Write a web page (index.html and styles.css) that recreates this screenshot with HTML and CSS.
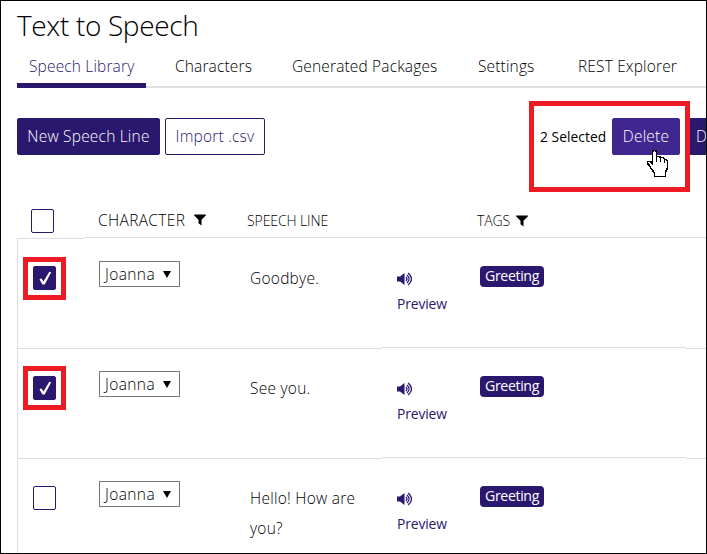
FILE: index.html
```html
<!DOCTYPE html>
<html lang="en">
<head>
<meta charset="utf-8">
<title>Text to Speech</title>
<link rel="stylesheet" href="styles.css">
</head>
<body>
<svg class="defs" aria-hidden="true">
  <symbol id="funnel" viewBox="0 0 12 12"><path d="M0.2 0.5H11.8V1.5L7.5 5.8V11.6L4.5 9.2V5.8L0.2 1.5Z" fill="currentColor"/></symbol>
  <symbol id="speaker" viewBox="0 0 16 14"><path d="M0 4.5H3L7.5 1V13L3 9.5H0Z" fill="currentColor"/><path d="M9 5Q11 7 9 9M10 3Q14.2 7 10 11M11 1Q18 7 11 13" fill="none" stroke="currentColor" stroke-width="1.2"/></symbol>
  <symbol id="check" viewBox="0 0 23 24"><path d="M6.5 13.5L8.3 12.3L10.5 15.5L16.3 5.8L18.2 6.3L11.7 18.4H9.5Z" fill="#fff"/></symbol>
</svg>
<div class="frame">
  <h1 class="title">Text to Speech</h1>
  <nav class="tabs">
    <a class="tab active">Speech Library</a>
    <a class="tab characters">Characters</a>
    <a class="tab packages">Generated Packages</a>
    <a class="tab settings">Settings</a>
    <a class="tab explorer">REST Explorer</a>
  </nav>
  <div class="toolbar">
    <button class="btn new">New Speech Line</button>
    <button class="btn outline">Import .csv</button>
    <span class="selected">2 Selected</span>
    <button class="btn delete">Delete</button>
    <button class="btn next">D</button>
    <div class="highlight-actions"></div>
    <svg class="cursor" viewBox="0 0 22 29" shape-rendering="crispEdges"><path d="M7.5 1.5H9.5L10.5 2.5V7.5H13.5L14.5 8.5H17.5L18.5 10.5H20.5L21.5 12.5V19L19.5 23V27.5H8.5V24L5.5 20L3.5 16.5L1.5 14.5V12.5H4.5L6.5 14.5V2.5Z" fill="#fff" stroke="#000" stroke-width="1.5"/><path d="M10.5 8V13M14.5 9V13M18.5 11V14" stroke="#000"/></svg>
  </div>
  <div class="table">
    <div class="row head">
      <div class="cell pick"><span class="box"></span></div>
      <div class="cell character"><span class="head-character">CHARACTER</span><svg class="funnel"><use href="#funnel"/></svg></div>
      <div class="cell line"><span>SPEECH LINE</span></div>
      <div class="cell audio"></div>
      <div class="cell tags"><span>TAGS</span><svg class="funnel"><use href="#funnel"/></svg></div>
      <div class="cell rest"></div>
    </div>
    <div class="row">
      <div class="cell pick"><span class="box checked"><svg><use href="#check"/></svg></span></div>
      <div class="cell character"><span class="select"><span class="name">Joanna</span><i class="arrow"></i></span></div>
      <div class="cell line">Goodbye.</div>
      <div class="cell audio"><svg class="speaker"><use href="#speaker"/></svg><span class="preview">Preview</span></div>
      <div class="cell tags"><span class="tag">Greeting</span></div>
      <div class="cell rest"></div>
    </div>
    <div class="row">
      <div class="cell pick"><span class="box checked tall"><svg><use href="#check"/></svg></span></div>
      <div class="cell character"><span class="select"><span class="name">Joanna</span><i class="arrow"></i></span></div>
      <div class="cell line">See you.</div>
      <div class="cell audio"><svg class="speaker"><use href="#speaker"/></svg><span class="preview">Preview</span></div>
      <div class="cell tags"><span class="tag">Greeting</span></div>
      <div class="cell rest"></div>
    </div>
    <div class="row">
      <div class="cell pick"><span class="box"></span></div>
      <div class="cell character"><span class="select"><span class="name">Joanna</span><i class="arrow"></i></span></div>
      <div class="cell line">Hello! How are<br>you?</div>
      <div class="cell audio"><svg class="speaker"><use href="#speaker"/></svg><span class="preview">Preview</span></div>
      <div class="cell tags"><span class="tag">Greeting</span></div>
      <div class="cell rest"></div>
    </div>
  </div>
</div>
</body>
</html>
```
FILE: styles.css
```css
*, *::before, *::after { box-sizing: border-box; }
body { margin: 0; background: #fff; color: #000; font: 340 15.5px/20px "Open Sans", "Noto Sans", sans-serif; }
.defs { position: absolute; width: 0; height: 0; }
.frame { width: 707px; height: 554px; border: 1px solid #000; padding-left: 16px; overflow: hidden; white-space: nowrap; }
.title { margin: 4px 0 0; height: 42px; font-size: 28px; line-height: 40px; font-weight: 300; letter-spacing: -0.35px; }
.tabs { display: flex; height: 41px; border-bottom: 2px solid #e1e1e1; letter-spacing: 0.15px; }
.tab { height: 41px; line-height: 38px; flex: none; }
.active { width: 129px; padding-left: 12px; color: #2a176e; border-bottom: 5px solid #2a176e; }
.characters { width: 117px; padding-left: 29px; }
.packages { width: 186px; padding-left: 29px; }
.settings { width: 100px; padding-left: 29px; }
.explorer { padding-left: 29px; }
.toolbar { display: flex; position: relative; height: 37px; margin-top: 30px; }
.btn { flex: none; height: 37px; padding: 0 0 2px; border: 1px solid #2a176e; border-radius: 2px; font: inherit; letter-spacing: 0.2px; color: #fff; background: #2a176e; }
.new { width: 143px; }
.outline { width: 100px; margin-left: 5px; background: #fff; color: #2a176e; }
.selected { flex: none; width: 72px; margin-left: 275px; font-size: 13.8px; font-weight: 400; line-height: 38px; letter-spacing: 0.05px; }
.delete { width: 68px; background: #40268f; border-color: #40268f; }
.next { width: 100px; margin-left: 9px; padding-left: 6px; text-align: left; }
.highlight-actions { position: absolute; left: 512px; top: -17px; width: 161px; height: 91px; border: 5px solid #ed1c24; }
.cursor { position: absolute; left: 629px; top: 31px; width: 22px; height: 29px; }
.table { margin-top: 48px; }
.row { display: grid; grid-template-columns: 67px 163px 135px 95px 209px 21px; height: 110px; }
.head { height: 36px; }
.cell { border-bottom: 1px solid #dedede; }
.row:not(.head) .pick { border-left: 1px solid #dedede; padding: 27px 0 0 15px; }
.row:not(.head) .audio, .row:not(.head) .tags { height: 109px; }
.head .cell { display: flex; align-items: center; height: 35px; }
.head .pick { height: 36px; align-items: flex-start; padding: 6px 0 0 14px; }
.box { position: relative; display: block; width: 23px; height: 24px; border: 1px solid #2a176e; border-radius: 2px; }
.checked { background: #2a176e; }
.checked svg { display: block; margin: -1px; width: 23px; height: 24px; }
.checked::after { content: ""; position: absolute; left: -11px; top: -10px; width: 43px; height: 43px; border: 5px solid #ed1c24; }
.tall::after { top: -11px; height: 44px; }
.head .character { padding: 0 0 0 14px; }
.head .line, .head .tags { font-size: 14px; letter-spacing: -0.1px; padding-top: 2px; }
.head .tags { padding-left: 0; }
.head-character { width: 88px; margin-top: -1px; letter-spacing: 0.35px; }
.funnel { width: 12px; height: 12px; margin-left: 8px; }
.head .tags .funnel { margin-left: 6px; }
.row:not(.head) .character { padding: 22px 0 0 15px; }
.select { display: flex; align-items: center; width: 81px; height: 26px; border: 1px solid #777; padding-left: 5px; }
.name { width: 58px; margin-top: -1px; letter-spacing: 0.4px; }
.arrow { border: 4px solid transparent; border-top: 7px solid #000; border-bottom: 0; }
.row:not(.head) .line { padding: 24px 0 0 3px; line-height: 30px; letter-spacing: 0.25px; }
.audio { padding: 33px 0 0 15px; color: #2a176e; }
.speaker { display: block; width: 16px; height: 14px; }
.preview { display: block; margin-top: 8px; line-height: 20px; font-size: 13.9px; font-weight: 500; letter-spacing: -0.15px; }
.row:not(.head) .tags { padding: 27px 0 0 3px; }
.tag { display: block; width: 64px; height: 21px; line-height: 20px; text-align: center; border-radius: 4px; background: #2a176e; color: #fff; font-size: 14.2px; font-weight: 450; letter-spacing: -0.4px; }
```
